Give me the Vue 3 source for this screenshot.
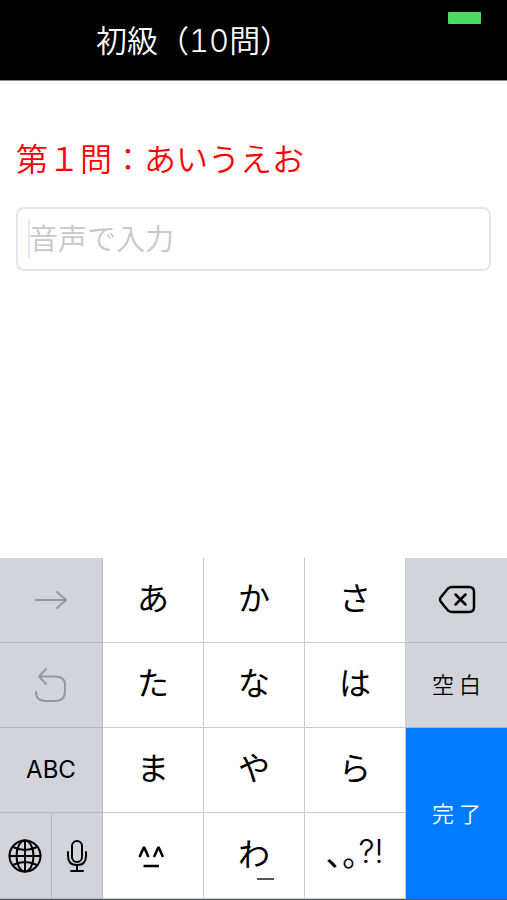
<script setup>
import { ref } from 'vue'

const answer = ref('')
</script>

<template>
  <div class="screen">
    <header class="bar">
      <h1 class="title">初級（<span class="digits">10</span>問）</h1>
      <span class="battery"></span>
    </header>

    <main class="quiz">
      <label class="question" for="answer">第１問：あいうえお</label>
      <div class="field">
        <input id="answer" v-model="answer" class="answer" type="text" placeholder="音声で入力" />
        <span class="caret"></span>
      </div>
    </main>

    <section class="keyboard">
      <button class="key side" type="button" aria-label="次へ">
        <svg class="dim" width="34" height="20" viewBox="0 0 34 20">
          <path d="M2 10H32M23 2L32 10L23 18" />
        </svg>
      </button>
      <button class="key" type="button">あ</button>
      <button class="key" type="button">か</button>
      <button class="key" type="button">さ</button>
      <button class="key side last" type="button" aria-label="削除">
        <svg class="bold" width="38" height="30" viewBox="0 0 38 30">
          <path d="M14 2H31Q36 2 36 7V22Q36 27 31 27H14Q12 27 10 25.500L3 17Q1 14.500 3 12L10 3.500Q12 2 14 2Z" />
          <path d="M17.500 9.500L27.500 19.500M27.500 9.500L17.500 19.500" />
        </svg>
      </button>

      <button class="key side" type="button" aria-label="元に戻す">
        <svg class="dim" width="34" height="36" viewBox="0 0 34 36">
          <path d="M12 2L5 9.500L12 17M5 9.500H21Q31 9.500 31 18V24Q31 34 21 34H12Q2 34 2 25" />
        </svg>
      </button>
      <button class="key" type="button">た</button>
      <button class="key" type="button">な</button>
      <button class="key" type="button">は</button>
      <button class="key side last word" type="button">空 白</button>

      <button class="key side latin" type="button">ABC</button>
      <button class="key" type="button">ま</button>
      <button class="key" type="button">や</button>
      <button class="key" type="button">ら</button>
      <button class="key done word" type="button">完 了</button>

      <div class="pair">
        <button class="key side" type="button" aria-label="言語切り替え">
          <svg class="line" width="34" height="34" viewBox="0 0 34 34">
            <circle cx="17" cy="17" r="15.500" />
            <ellipse cx="17" cy="17" rx="8.500" ry="15.500" />
            <path d="M17 1.500V32.500M1.500 17H32.500M5 8Q17 14 29 8M5 26Q17 20 29 26" />
          </svg>
        </button>
        <button class="key side" type="button" aria-label="音声入力">
          <svg class="line" width="22" height="34" viewBox="0 0 22 34">
            <rect x="6" y="2" width="10" height="21" rx="5" />
            <path d="M2 13V17Q2 26 11 26Q20 26 20 17V13M11 26V32M5 32H17" />
          </svg>
        </button>
      </div>
      <button class="key emoticon" type="button" aria-label="顔文字">
        <svg class="face" width="34" height="26" viewBox="0 0 34 26">
          <path d="M3.500 14L8 4L12.500 14M18 14L22.500 4L27 14M7.500 23H23" />
        </svg>
      </button>
      <button class="key" type="button"><span class="wa">わ</span></button>
      <button class="key" type="button">､｡<span class="ascii">?!</span></button>
    </section>
  </div>
</template>

<style>
body {
  margin: 0;
  background: #fff;
}
</style>

<style scoped>
.screen {
  display: flex;
  flex-direction: column;
  min-height: 100vh;
  font-family: "Noto Sans CJK JP", sans-serif;
  font-weight: 350;
}

.bar {
  position: relative;
  display: flex;
  align-items: center;
  height: 80px;
  padding: 0 96px;
  background: #000;
  border-bottom: 1px solid #8a8a8a;
}

.title {
  margin: 0;
  color: #fff;
  font-size: 31px;
  line-height: 40px;
  font-weight: 350;
}

.digits {
  font-family: Inter, sans-serif;
  font-weight: 300;
  font-variant-numeric: tabular-nums;
}

.battery {
  position: absolute;
  top: 12px;
  right: 26px;
  width: 33px;
  height: 12px;
  border-radius: 1px;
  background: #4cd964;
}

.quiz {
  display: flex;
  flex-direction: column;
  gap: 30px;
  padding: 56px 16px 24px;
}

.question {
  color: #f00;
  font-size: 32px;
  line-height: 40px;
}

.field {
  position: relative;
}

.answer {
  display: block;
  box-sizing: border-box;
  width: 100%;
  height: 64px;
  padding: 0 11px 4px;
  border: 2px solid #e6e6e6;
  border-radius: 8px;
  outline: none;
  background: #fff;
  color: #000;
  font: inherit;
  font-size: 29px;
}

.answer::placeholder {
  color: #c8c8ca;
  opacity: 1;
}

.caret {
  position: absolute;
  top: 12px;
  left: 12px;
  width: 2px;
  height: 39px;
  background: #e6e6fb;
}

.keyboard {
  display: grid;
  grid-template-columns: 103fr 101fr 101fr 101fr 101fr;
  grid-template-rows: 85px 85px 85px 86px;
  margin-top: auto;
  border-bottom: 1px solid #55585c;
}

.key {
  display: flex;
  align-items: center;
  justify-content: center;
  box-sizing: border-box;
  min-width: 0;
  margin: 0;
  padding: 0 0 8px;
  border: 0 solid #c8cbcf;
  border-width: 0 1px 1px 0;
  border-radius: 0;
  background: #fff;
  color: #000;
  font-family: inherit;
  font-size: 32px;
  font-weight: 400;
  line-height: 40px;
}

.side {
  padding: 0;
  background: #d1d5db;
  border-color: #b6babf;
}

.last {
  border-right-width: 0;
}

.emoticon {
  padding: 0;
}

.word {
  padding: 0 0 4px;
  font-size: 22px;
  font-weight: 350;
}

.latin {
  font-family: Inter, sans-serif;
  font-size: 24px;
}

.done {
  grid-row: span 2;
  border: 0;
  background: #007aff;
  color: #fff;
}

.pair {
  display: grid;
  grid-template-columns: 1fr 1fr;
}

.wa {
  position: relative;
}

.wa::after {
  content: "";
  position: absolute;
  right: -4px;
  bottom: -8px;
  width: 17px;
  height: 2px;
  background: #555;
}

.ascii {
  font-family: Inter, sans-serif;
  font-weight: 300;
}

svg {
  fill: none;
  stroke: #000;
  stroke-linecap: round;
  stroke-linejoin: round;
}

.dim {
  stroke: #95999e;
  stroke-width: 2;
}

.bold {
  stroke-width: 2.500;
}

.line {
  stroke-width: 2;
}

.face {
  stroke-width: 2.500;
  stroke-linecap: butt;
  stroke-linejoin: bevel;
}
</style>
